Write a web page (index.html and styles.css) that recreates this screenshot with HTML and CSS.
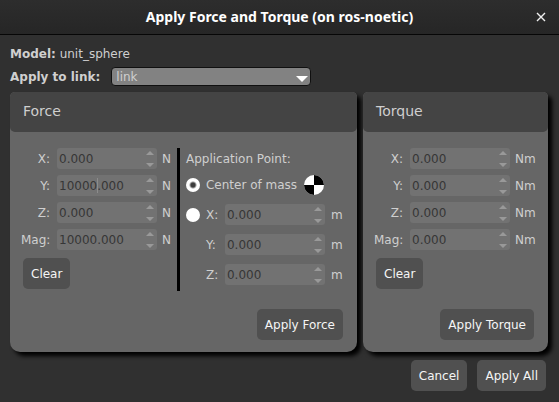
FILE: index.html
```
<!DOCTYPE html>
<html lang="en">
<head>
<meta charset="utf-8">
<title>Apply Force and Torque</title>
<link rel="stylesheet" href="styles.css">
</head>
<body>
<header class="titlebar">
  <h1 class="title">Apply Force and Torque (on ros-noetic)</h1>
  <button class="close" type="button" aria-label="Close"><svg width="10" height="10" viewBox="0 0 10 10"><path d="M1 1L9 9M9 1L1 9" stroke="currentColor" stroke-width="1.4"/></svg></button>
</header>
<main class="content">
  <p class="model"><b>Model:</b> unit_sphere</p>
  <div class="link-row">
    <label for="link">Apply to link:</label>
    <span class="combo">
      <select id="link"><option>link</option></select>
      <svg class="combo-arrow" width="12" height="6" viewBox="0 0 12 6"><path d="M0 0H12L6 6Z" fill="#fff"/></svg>
    </span>
  </div>
  <div class="panels">
    <section class="panel">
      <h2 class="panel-title">Force</h2>
      <div class="panel-body">
        <div class="force-columns">
          <div class="vector">
            <div class="fields">
              <label for="fx">X:</label>
              <span class="spin"><input id="fx" type="text" value="0.000"><svg class="arrows" width="8" height="16" viewBox="0 0 8 16"><path d="M0 4L4 0L8 4ZM0 12L4 16L8 12Z"/></svg></span>
              <span>N</span>
              <label for="fy">Y:</label>
              <span class="spin"><input id="fy" type="text" value="10000.000"><i class="caret"></i><svg class="arrows" width="8" height="16" viewBox="0 0 8 16"><path d="M0 4L4 0L8 4ZM0 12L4 16L8 12Z"/></svg></span>
              <span>N</span>
              <label for="fz">Z:</label>
              <span class="spin"><input id="fz" type="text" value="0.000"><svg class="arrows" width="8" height="16" viewBox="0 0 8 16"><path d="M0 4L4 0L8 4ZM0 12L4 16L8 12Z"/></svg></span>
              <span>N</span>
              <label for="fm">Mag:</label>
              <span class="spin"><input id="fm" type="text" value="10000.000"><svg class="arrows" width="8" height="16" viewBox="0 0 8 16"><path d="M0 4L4 0L8 4ZM0 12L4 16L8 12Z"/></svg></span>
              <span>N</span>
            </div>
            <button class="button clear" type="button">Clear</button>
          </div>
          <div class="application">
            <p class="application-title">Application Point:</p>
            <div class="mass-row">
              <input class="radio" type="radio" name="point" id="mass" checked>
              <label for="mass">Center of mass</label>
              <svg class="mass-icon" width="20" height="20" viewBox="0 0 20 20"><circle cx="10" cy="10" r="10" fill="#fff"/><path d="M10 10V0A10 10 0 0 1 20 10ZM10 10V20A10 10 0 0 1 0 10Z" fill="#000"/></svg>
            </div>
            <div class="point-fields">
              <input class="radio" type="radio" name="point" id="custom" aria-label="Custom point">
              <label for="px">X:</label>
              <span class="spin"><input id="px" type="text" value="0.000"><svg class="arrows" width="8" height="16" viewBox="0 0 8 16"><path d="M0 4L4 0L8 4ZM0 12L4 16L8 12Z"/></svg></span>
              <span>m</span>
              <label class="indent" for="py">Y:</label>
              <span class="spin"><input id="py" type="text" value="0.000"><svg class="arrows" width="8" height="16" viewBox="0 0 8 16"><path d="M0 4L4 0L8 4ZM0 12L4 16L8 12Z"/></svg></span>
              <span>m</span>
              <label class="indent" for="pz">Z:</label>
              <span class="spin"><input id="pz" type="text" value="0.000"><svg class="arrows" width="8" height="16" viewBox="0 0 8 16"><path d="M0 4L4 0L8 4ZM0 12L4 16L8 12Z"/></svg></span>
              <span>m</span>
            </div>
          </div>
        </div>
        <button class="button apply" type="button">Apply Force</button>
      </div>
    </section>
    <section class="panel">
      <h2 class="panel-title">Torque</h2>
      <div class="panel-body">
        <div class="vector">
          <div class="fields">
            <label for="tx">X:</label>
            <span class="spin"><input id="tx" type="text" value="0.000"><svg class="arrows" width="8" height="16" viewBox="0 0 8 16"><path d="M0 4L4 0L8 4ZM0 12L4 16L8 12Z"/></svg></span>
            <span>Nm</span>
            <label for="ty">Y:</label>
            <span class="spin"><input id="ty" type="text" value="0.000"><svg class="arrows" width="8" height="16" viewBox="0 0 8 16"><path d="M0 4L4 0L8 4ZM0 12L4 16L8 12Z"/></svg></span>
            <span>Nm</span>
            <label for="tz">Z:</label>
            <span class="spin"><input id="tz" type="text" value="0.000"><svg class="arrows" width="8" height="16" viewBox="0 0 8 16"><path d="M0 4L4 0L8 4ZM0 12L4 16L8 12Z"/></svg></span>
            <span>Nm</span>
            <label for="tm">Mag:</label>
            <span class="spin"><input id="tm" type="text" value="0.000"><svg class="arrows" width="8" height="16" viewBox="0 0 8 16"><path d="M0 4L4 0L8 4ZM0 12L4 16L8 12Z"/></svg></span>
            <span>Nm</span>
          </div>
          <button class="button clear" type="button">Clear</button>
        </div>
        <button class="button apply" type="button">Apply Torque</button>
      </div>
    </section>
  </div>
  <footer class="actions">
    <button class="button" type="button">Cancel</button>
    <button class="button" type="button">Apply All</button>
  </footer>
</main>
</body>
</html>
```
FILE: styles.css
```
* {
  box-sizing: border-box;
}

body {
  margin: 0;
  min-height: 100vh;
  background: #303030;
  color: #cfcfcf;
  font: 12px/16px "DejaVu Sans", sans-serif;
}

input,
select,
button {
  margin: 0;
  font: inherit;
}

svg {
  display: block;
}

.titlebar {
  display: grid;
  grid-template-columns: 36px 1fr 36px;
  align-items: center;
  height: 35px;
  border-bottom: 1px solid #060606;
  background: linear-gradient(#2d2d2d, #262626);
  color: #fff;
}

.title {
  grid-column: 2;
  margin: 0;
  text-align: center;
  font: bold 14px/20px "Noto Sans", sans-serif;
}

.close {
  display: grid;
  place-items: center;
  padding: 0;
  height: 32px;
  border: 0;
  background: none;
  color: #f0f0f0;
}

.content {
  padding: 11px 11px 10px 10px;
}

.model {
  margin: 0;
}

.link-row {
  display: flex;
  align-items: center;
  gap: 11px;
  margin-top: 5px;
}

.link-row label {
  font-weight: bold;
}

.combo {
  position: relative;
  width: 200px;
}

.combo select {
  display: block;
  appearance: none;
  width: 100%;
  height: 19px;
  padding: 0 4px;
  border: 1px solid #101010;
  border-radius: 4px;
  background: #828282;
  color: #cfcfcf;
}

.combo-arrow {
  position: absolute;
  right: 3px;
  top: 9px;
  pointer-events: none;
}

.panels {
  display: grid;
  grid-template-columns: 347fr 185fr;
  gap: 6px;
  margin-top: 6px;
}

.panel {
  display: flex;
  flex-direction: column;
  border-radius: 5px 5px 10px 10px;
  background: #666;
  box-shadow: 4px 4px 4px #000;
}

.panel-title {
  margin: 0;
  padding: 9px 13px 11px;
  border-radius: 5px;
  background: #444;
  font: 14px/20px "DejaVu Sans", sans-serif;
}

.panel-body {
  display: flex;
  flex: 1;
  flex-direction: column;
  padding: 16px 10px 12px 11px;
}

.force-columns {
  display: flex;
  gap: 6px;
}

.fields {
  display: grid;
  grid-template-columns: 29px 100px auto;
  gap: 6px;
  align-items: center;
  justify-content: start;
}

.fields label {
  text-align: right;
}

.fields .spin {
  margin: 0 -1px 0 1px;
}

.spin {
  position: relative;
}

.spin input {
  display: block;
  width: 100%;
  height: 21px;
  padding: 0 18px 0 2px;
  border: 0;
  border-radius: 3px;
  background: #727272;
  color: #363636;
}

.arrows {
  position: absolute;
  top: 3px;
  right: 3px;
  fill: #999;
  pointer-events: none;
}

.caret {
  position: absolute;
  top: 3px;
  left: 40px;
  width: 1px;
  height: 15px;
  background: #8c8c8c;
}

.button {
  height: 31px;
  padding: 0 8px;
  border: 0;
  border-radius: 5px;
  background: #505050;
  color: #f5f5f5;
}

.clear {
  margin: 8px 0 0 2px;
}

.application {
  flex: 1;
  padding-left: 6px;
  border-left: 3px solid #000;
  height: 143px;
}

.application-title {
  margin: 0;
  line-height: 22px;
}

.mass-row {
  display: flex;
  align-items: center;
  gap: 6px;
  margin-top: 5px;
}

.mass-icon {
  margin-left: 1px;
}

.radio {
  appearance: none;
  width: 14px;
  height: 14px;
  border-radius: 50%;
  background: #fff;
}

.radio:checked {
  background: radial-gradient(circle, #3c3c3c 2px, #fff 4px);
}

.point-fields {
  display: grid;
  grid-template-columns: 14px 13px 100px auto;
  gap: 9px 6px;
  align-items: center;
  justify-content: start;
  margin-top: 9px;
}

.indent {
  grid-column: 2;
}

.apply {
  align-self: flex-end;
  margin-top: auto;
  margin-right: 4px;
}

.force-columns + .apply {
  margin-top: 18px;
}

.actions {
  display: flex;
  justify-content: flex-end;
  gap: 10px;
  margin-top: 8px;
  padding-right: 2px;
}
```
